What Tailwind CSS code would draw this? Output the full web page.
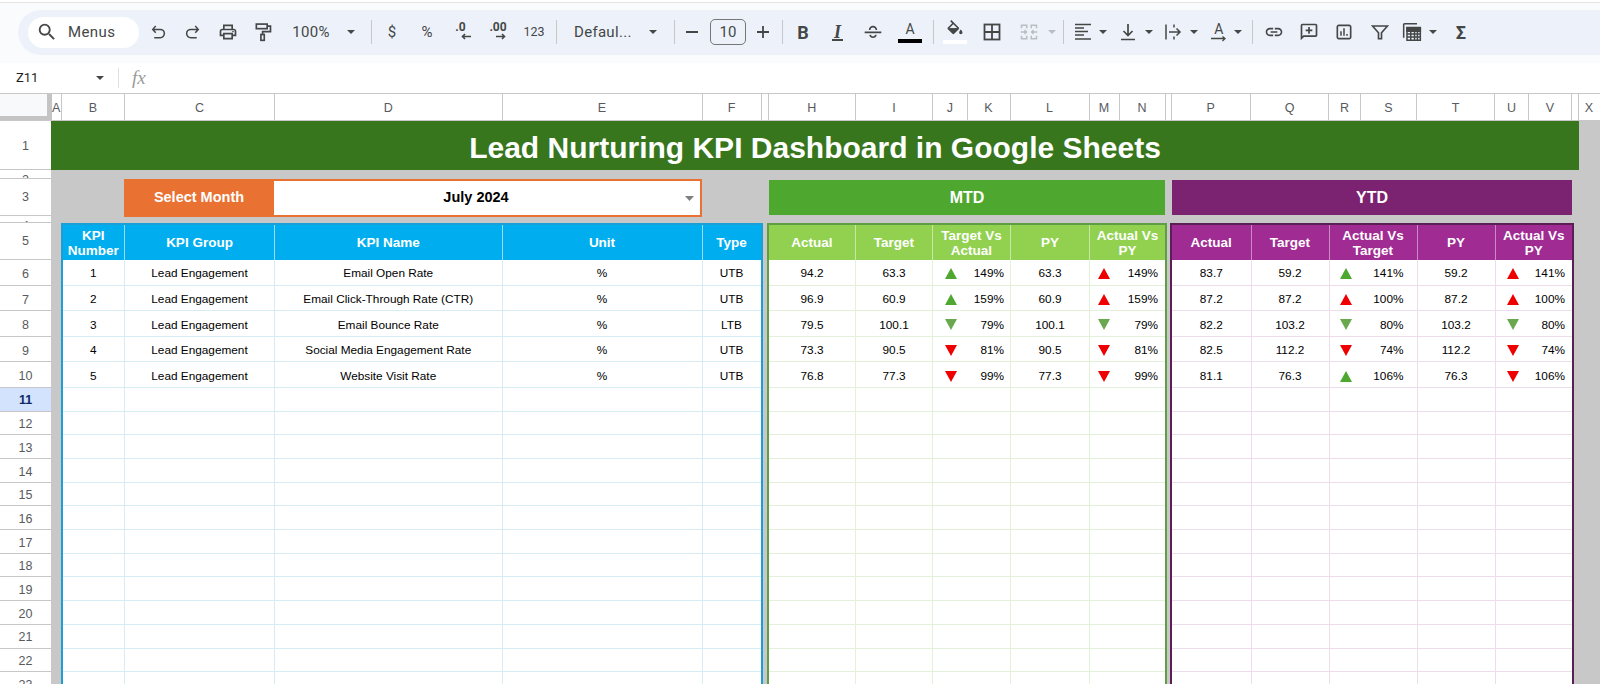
<!DOCTYPE html>
<html lang="en">
<head>
<meta charset="utf-8">
<title>Lead Nurturing KPI Dashboard</title>
<script src="https://cdn.jsdelivr.net/npm/@tailwindcss/browser@4"></script>
</head>
<body class="bg-white">
<div class="w-[1600px] h-[684px] overflow-hidden flex flex-col bg-white font-['Liberation_Sans',sans-serif]">
  <div class="h-[3px] shrink-0 border-b border-[#e3e3e3]"></div>

  <!-- toolbar -->
  <div class="h-[60px] shrink-0 bg-[#f9fbfd] pt-[7px] pl-[18px] font-['Roboto',sans-serif] text-[#444746]">
    <div class="h-[44.5px] bg-[#edf2fa] rounded-l-full flex items-center pl-[10px]">
      <div class="w-[111px] h-[31px] rounded-full bg-white flex items-center pl-[8px] gap-[10px] shrink-0">
        <svg class="w-[22px] h-[22px]" viewBox="0 0 24 24" fill="#444746"><path d="M15.5 14h-.79l-.28-.27A6.47 6.47 0 0 0 16 9.5 6.5 6.5 0 1 0 9.5 16c1.61 0 3.09-.59 4.23-1.57l.27.28v.79l5 4.99L20.49 19l-4.99-5zm-6 0C7.01 14 5 11.99 5 9.5S7.01 5 9.5 5 14 7.01 14 9.5 11.99 14 9.5 14z"/></svg>
        <span class="text-[15px] tracking-[0.4px]">Menus</span>
      </div>
      <svg class="ml-[10px] w-[18px] h-[18px] shrink-0" viewBox="0 0 24 24" fill="none" stroke="#444746" stroke-width="2"><path d="M9 4 L5 8.5 L9 13 M5 8.5 H15 a5.5 5.5 0 0 1 0 11 H7"/></svg>
      <svg class="ml-[17px] w-[18px] h-[18px] shrink-0" viewBox="0 0 24 24" fill="none" stroke="#444746" stroke-width="2"><path d="M15 4 L19 8.5 L15 13 M19 8.5 H9 a5.5 5.5 0 0 0 0 11 H17"/></svg>
      <svg class="ml-[16px] w-[20px] h-[20px] shrink-0" viewBox="0 0 24 24" fill="#444746"><path d="M19 8h-1V3H6v5H5c-1.66 0-3 1.34-3 3v6h4v4h12v-4h4v-6c0-1.66-1.34-3-3-3zM8 5h8v3H8V5zm8 12v2H8v-4h8v2zm2-2v-2H6v2H4v-4c0-.55.45-1 1-1h14c.55 0 1 .45 1 1v4h-2z"/><circle cx="18" cy="11.5" r="1"/></svg>
      <svg class="ml-[14.5px] w-[20px] h-[20px] shrink-0" viewBox="0 0 24 24" fill="none" stroke="#444746" stroke-width="2"><rect x="4" y="2.5" width="13" height="5.5"/><path d="M17 5h4v6.5H11.5V15"/><rect x="9.5" y="15" width="4" height="7"/></svg>
      <span class="ml-[18.5px] w-[40px] shrink-0 text-[15px] tracking-[0.3px] text-center">100%</span>
      <svg class="ml-[16px] w-[8px] h-[4px] shrink-0" viewBox="0 0 8 4" fill="#444746"><path d="M0 0h8L4 4z"/></svg>
      <div class="ml-[15.5px] w-px h-[24px] bg-[#c7c7c7] shrink-0"></div>
      <span class="ml-[14.5px] w-[12px] shrink-0 text-[15px] text-center">$</span>
      <span class="ml-[22px] w-[14px] shrink-0 text-[15px] text-center">%</span>
      <div class="ml-[17.5px] w-[22px] h-[22px] shrink-0 flex flex-col items-center">
        <span class="text-[12px] leading-[12px] font-bold mr-[4px]">.0</span>
        <svg class="w-[10px] h-[7px] ml-[6px]" viewBox="0 0 10 7" fill="none" stroke="#444746" stroke-width="1.6"><path d="M10 3.5H1.5M4 1L1.5 3.5 4 6"/></svg>
      </div>
      <div class="ml-[13.5px] w-[22px] h-[22px] shrink-0 flex flex-col items-center">
        <span class="text-[12px] leading-[12px] font-bold">.00</span>
        <svg class="w-[10px] h-[7px] ml-[6px]" viewBox="0 0 10 7" fill="none" stroke="#444746" stroke-width="1.6"><path d="M0 3.5h8.5M6 1l2.5 2.5L6 6"/></svg>
      </div>
      <span class="ml-[14px] w-[22px] shrink-0 text-[12.5px] text-center">123</span>
      <div class="ml-[11px] w-px h-[24px] bg-[#c7c7c7] shrink-0"></div>
      <span class="ml-[17px] w-[60px] shrink-0 text-[15px] tracking-[0.3px] whitespace-nowrap">Defaul...</span>
      <svg class="ml-[15px] w-[8px] h-[4px] shrink-0" viewBox="0 0 8 4" fill="#444746"><path d="M0 0h8L4 4z"/></svg>
      <div class="ml-[16.5px] w-px h-[24px] bg-[#c7c7c7] shrink-0"></div>
      <div class="ml-[11.5px] w-[12px] h-[2px] bg-[#444746] shrink-0"></div>
      <div class="ml-[12px] w-[36px] h-[26px] shrink-0 rounded-[5px] border border-[#747775] flex items-center justify-center text-[15px]">10</div>
      <svg class="ml-[9.5px] w-[14px] h-[14px] shrink-0" viewBox="0 0 14 14" fill="none" stroke="#444746" stroke-width="1.8"><path d="M7 1v12M1 7h12"/></svg>
      <div class="ml-[12px] w-px h-[24px] bg-[#c7c7c7] shrink-0"></div>
      <span class="ml-[11.5px] w-[18px] shrink-0 text-center text-[18px] font-bold">B</span>
      <div class="ml-[16.5px] w-[18px] shrink-0 flex flex-col items-center">
        <span class="text-[18px] leading-[16px] font-bold italic font-['Liberation_Serif',serif]">I</span>
        <div class="w-[11px] h-[2px] bg-[#444746] -mt-[1px]"></div>
      </div>
      <svg class="ml-[16.5px] w-[20px] h-[20px] shrink-0" viewBox="0 0 24 24" fill="none" stroke="#444746" stroke-width="2"><path d="M8 9.5a4 4 0 0 1 8 0M2 12.5h20M8.5 15.5a3.6 3.6 0 0 0 7 0"/></svg>
      <div class="ml-[15px] w-[24px] shrink-0 flex flex-col items-center">
        <span class="text-[14px] leading-[15px]">A</span>
        <div class="w-[24px] h-[4px] bg-black mt-[2px]"></div>
      </div>
      <div class="ml-[10.5px] w-px h-[24px] bg-[#c7c7c7] shrink-0"></div>
      <div class="ml-[9.5px] w-[24px] shrink-0 flex flex-col items-center">
        <svg class="w-[20px] h-[20px]" viewBox="0 0 24 24" fill="#444746"><path d="M16.56 8.94L7.62 0 6.21 1.41l2.38 2.38-5.15 5.15c-.59.59-.59 1.54 0 2.12l5.5 5.5c.29.29.68.44 1.06.44s.77-.15 1.06-.44l5.5-5.5c.59-.58.59-1.53 0-2.12zM5.21 10L10 5.21 14.79 10H5.21zM19 11.5s-2 2.17-2 3.5c0 1.1.9 2 2 2s2-.9 2-2c0-1.33-2-3.5-2-3.5z"/><path d="M5 10h10l-5 5z"/></svg>
        <div class="w-[24px] h-[4px] bg-white"></div>
      </div>
      <svg class="ml-[16px] w-[18px] h-[18px] shrink-0" viewBox="0 0 24 24" fill="none" stroke="#444746" stroke-width="2.4"><rect x="2" y="2" width="20" height="20"/><path d="M12 2v20M2 12h20"/></svg>
      <svg class="ml-[18.6px] w-[18px] h-[18px] shrink-0" viewBox="0 0 24 24" fill="none" stroke="#b9bdc3" stroke-width="2"><path d="M2 7V3h7v4M2 11v2M2 17v4h7v-4M22 7V3h-7v4M22 11v2M22 17v4h-7v-4M2 12h6M6 9.5L8.5 12 6 14.500M22 12h-6M18 9.500L15.500 12l2.500 2.500"/></svg>
      <svg class="ml-[10.4px] w-[8px] h-[4px] shrink-0" viewBox="0 0 8 4" fill="#b9bdc3"><path d="M0 0h8L4 4z"/></svg>
      <div class="ml-[7.5px] w-px h-[24px] bg-[#c7c7c7] shrink-0"></div>
      <svg class="ml-[10px] w-[18px] h-[18px] shrink-0" viewBox="0 0 18 18" fill="none" stroke="#444746" stroke-width="1.500"><path d="M1 1.500h16M1 5h9M1 8.500h13M1 12h9M1 16h16"/></svg>
      <svg class="ml-[6.4px] w-[8px] h-[4px] shrink-0" viewBox="0 0 8 4" fill="#444746"><path d="M0 0h8L4 4z"/></svg>
      <svg class="ml-[12px] w-[18px] h-[18px] shrink-0" viewBox="0 0 18 18" fill="none" stroke="#444746" stroke-width="1.700"><path d="M9 1v11M4.500 8L9 12.500 13.500 8M2 16.500h14"/></svg>
      <svg class="ml-[8px] w-[8px] h-[4px] shrink-0" viewBox="0 0 8 4" fill="#444746"><path d="M0 0h8L4 4z"/></svg>
      <svg class="ml-[11px] w-[18px] h-[18px] shrink-0" viewBox="0 0 18 18" fill="none" stroke="#444746" stroke-width="1.500"><path d="M2 1.500v15M10 1.500v3M10 13.500v3M5 9h11M12.500 5.500L16 9l-3.500 3.500"/></svg>
      <svg class="ml-[8px] w-[8px] h-[4px] shrink-0" viewBox="0 0 8 4" fill="#444746"><path d="M0 0h8L4 4z"/></svg>
      <div class="ml-[12px] w-[18px] shrink-0 flex flex-col items-center">
        <span class="text-[14px] leading-[13px]">A</span>
        <svg class="w-[16px] h-[6px]" viewBox="0 0 16 6" fill="none" stroke="#444746" stroke-width="1.300"><path d="M0 2.500h14M11.500 0.500L14 2.500l-2.500 2.500"/></svg>
      </div>
      <svg class="ml-[6.6px] w-[8px] h-[4px] shrink-0" viewBox="0 0 8 4" fill="#444746"><path d="M0 0h8L4 4z"/></svg>
      <div class="ml-[9.9px] w-px h-[24px] bg-[#c7c7c7] shrink-0"></div>
      <svg class="ml-[10.5px] w-[20px] h-[20px] shrink-0" viewBox="0 0 24 24" fill="#444746"><path d="M3.9 12c0-1.71 1.39-3.1 3.1-3.1h4V7H7c-2.760 0-5 2.240-5 5s2.240 5 5 5h4v-1.900H7c-1.710 0-3.100-1.390-3.100-3.100zM8 13h8v-2H8v2zm9-6h-4v1.900h4c1.710 0 3.100 1.390 3.100 3.100s-1.390 3.100-3.100 3.100h-4V17h4c2.760 0 5-2.240 5-5s-2.240-5-5-5z"/></svg>
      <svg class="ml-[15px] w-[20px] h-[20px] shrink-0" viewBox="0 0 24 24" fill="#444746"><path d="M20 2H4c-1.100 0-2 .9-2 2v18l4-4h14c1.100 0 2-.9 2-2V4c0-1.100-.9-2-2-2zm0 14H5.200L4 17.200V4h16v12z"/><path d="M11 6h2v3h3v2h-3v3h-2v-3H8V9h3z"/></svg>
      <svg class="ml-[16.6px] w-[18px] h-[18px] shrink-0" viewBox="0 0 24 24" fill="#444746"><path d="M19 2H5C3.400 2 2 3.400 2 5v14c0 1.600 1.400 3 3 3h14c1.600 0 3-1.400 3-3V5c0-1.600-1.400-3-3-3zm.8 17c0 .4-.4.800-.8.800H5c-.4 0-.8-.4-.8-.8V5c0-.4.4-.8.800-.8h14c.4 0 .8.400.8.800v14z"/><path d="M7 11h2v6H7zM11 7h2v10h-2zM15 14.500h2V17h-2z"/></svg>
      <svg class="ml-[17.4px] w-[18px] h-[18px] shrink-0" viewBox="0 0 24 24" fill="none" stroke="#444746" stroke-width="2.200"><path d="M2 4h20l-8 9v8h-4v-8z"/></svg>
      <svg class="ml-[13px] w-[20px] h-[20px] shrink-0" viewBox="0 0 24 24" fill="none" stroke="#444746" stroke-width="1.800"><path d="M2 19V3c0-.6.4-1 1-1h15"/><path d="M6 6.500h16V22H6z"/><path d="M6 7h16v4H6z" fill="#444746"/><path d="M10.500 11v11M15 11v11M18.500 11v11M6 14.500h16M6 18h16"/></svg>
      <svg class="ml-[7px] w-[8px] h-[4px] shrink-0" viewBox="0 0 8 4" fill="#444746"><path d="M0 0h8L4 4z"/></svg>
      <span class="ml-[17px] w-[14px] shrink-0 text-center text-[18px] font-bold">Σ</span>
    </div>
  </div>

  <!-- formula bar -->
  <div class="h-[31px] shrink-0 border-b border-[#c7c7c7] flex items-center font-['Roboto',sans-serif] text-[#1f1f1f]">
    <span class="ml-[16px] w-[80px] text-[13px]">Z11</span>
    <svg class="w-[8px] h-[4px]" viewBox="0 0 8 4" fill="#444746"><path d="M0 0h8L4 4z"/></svg>
    <div class="ml-[14px] w-px h-[20px] bg-[#e0e0e0]"></div>
    <span class="ml-[13px] text-[19px] italic text-[#9a9a9a] font-['Liberation_Serif',serif]">fx</span>
  </div>

  <!-- column letters -->
  <div class="h-[27px] shrink-0 flex text-[12.5px] text-[#575a5e] border-b border-[#c7c7c7]">
    <div class="w-[51.5px] shrink-0 bg-[#f8f9fa] border-r-[5px] border-b-[4px] border-[#c4c4c4]"></div>
    <div class="w-[10.5px] shrink-0 pt-[2px] border-r border-[#c7c7c7] flex items-center justify-center">A</div>
    <div class="w-[63px] shrink-0 pt-[2px] border-r border-[#c7c7c7] flex items-center justify-center">B</div>
    <div class="w-[150px] shrink-0 pt-[2px] border-r border-[#c7c7c7] flex items-center justify-center">C</div>
    <div class="w-[227.5px] shrink-0 pt-[2px] border-r border-[#c7c7c7] flex items-center justify-center">D</div>
    <div class="w-[200px] shrink-0 pt-[2px] border-r border-[#c7c7c7] flex items-center justify-center">E</div>
    <div class="w-[59px] shrink-0 pt-[2px] border-r border-[#c7c7c7] flex items-center justify-center">F</div>
    <div class="w-[7px] shrink-0 border-r border-[#c7c7c7]"></div>
    <div class="w-[87.5px] shrink-0 pt-[2px] border-r border-[#c7c7c7] flex items-center justify-center">H</div>
    <div class="w-[77px] shrink-0 pt-[2px] border-r border-[#c7c7c7] flex items-center justify-center">I</div>
    <div class="w-[34.500px] shrink-0 pt-[2px] border-r border-[#c7c7c7] flex items-center justify-center">J</div>
    <div class="w-[43px] shrink-0 pt-[2px] border-r border-[#c7c7c7] flex items-center justify-center">K</div>
    <div class="w-[79px] shrink-0 pt-[2px] border-r border-[#c7c7c7] flex items-center justify-center">L</div>
    <div class="w-[30px] shrink-0 pt-[2px] border-r border-[#c7c7c7] flex items-center justify-center">M</div>
    <div class="w-[46px] shrink-0 pt-[2px] border-r border-[#c7c7c7] flex items-center justify-center">N</div>
    <div class="w-[6px] shrink-0 border-r border-[#c7c7c7]"></div>
    <div class="w-[79.500px] shrink-0 pt-[2px] border-r border-[#c7c7c7] flex items-center justify-center">P</div>
    <div class="w-[78px] shrink-0 pt-[2px] border-r border-[#c7c7c7] flex items-center justify-center">Q</div>
    <div class="w-[32px] shrink-0 pt-[2px] border-r border-[#c7c7c7] flex items-center justify-center">R</div>
    <div class="w-[56px] shrink-0 pt-[2px] border-r border-[#c7c7c7] flex items-center justify-center">S</div>
    <div class="w-[78px] shrink-0 pt-[2px] border-r border-[#c7c7c7] flex items-center justify-center">T</div>
    <div class="w-[34px] shrink-0 pt-[2px] border-r border-[#c7c7c7] flex items-center justify-center">U</div>
    <div class="w-[43px] shrink-0 pt-[2px] border-r border-[#c7c7c7] flex items-center justify-center">V</div>
    <div class="w-[6.500px] shrink-0 border-r border-[#c7c7c7]"></div>
    <div class="w-[21px] shrink-0 pt-[2px] flex items-center justify-center">X</div>
  </div>

  <!-- sheet -->
  <div class="flex-1 min-h-0 flex overflow-hidden">
    <div id="rowHead" class="w-[51px] shrink-0 flex flex-col text-[12.5px] text-[#575a5e]"></div>

    <div class="flex-1 min-w-0 bg-[#c8c8c8] flex flex-col">
      <div class="h-[49px] shrink-0 w-[1528px] pt-[3px] bg-[#38761d] flex items-center justify-center text-white font-bold text-[30px]">Lead Nurturing KPI Dashboard in Google Sheets</div>
      <div class="h-[9px] shrink-0"></div>
      <div class="h-[37px] shrink-0 flex items-center">
        <div class="ml-[73px] w-[150px] h-[38px] bg-[#e97132] flex items-center justify-center text-white font-bold text-[14.5px] shrink-0">Select Month</div>
        <div class="w-[428px] h-[38px] pr-[22px] bg-white border-2 border-l-0 border-[#e97132] flex items-center justify-center relative text-black font-bold text-[14.5px] shrink-0">
          July 2024
          <svg class="absolute right-[6px] top-[15px] w-[9px] h-[5px]" viewBox="0 0 9 5" fill="#7f7f7f"><path d="M0 0h9L4.500 5z"/></svg>
        </div>
        <div class="ml-[67px] w-[396px] h-[35px] bg-[#4ea72e] flex items-center justify-center text-white font-bold text-[16px] shrink-0">MTD</div>
        <div class="ml-[7px] w-[400px] h-[35px] bg-[#7b2270] flex items-center justify-center text-white font-bold text-[16px] shrink-0">YTD</div>
      </div>
      <div class="h-[7px] shrink-0"></div>
      <div class="flex-1 min-h-0 flex items-stretch">
        <div id="tblKpi" class="ml-[9.5px] w-[702px] shrink-0 h-[600px] bg-white border-2 border-[#1a9fd6] text-black text-[11.8px]"></div>
        <div id="tblMtd" class="ml-[4.5px] w-[400px] shrink-0 h-[600px] bg-white border-2 border-[#5f9e45] text-black text-[11.8px]"></div>
        <div id="tblYtd" class="ml-[3px] w-[404px] shrink-0 h-[600px] bg-white border-2 border-[#5c1f55] text-black text-[11.8px]"></div>
      </div>
    </div>
  </div>
</div>

<script>
  var up = function (c) { return '<svg class="w-[12px] h-[11px] shrink-0" viewBox="0 0 12 11"><path fill="' + c + '" d="M6 0l6 11H0z"/></svg>'; };
  var dn = function (c) { return '<svg class="w-[12px] h-[11px] shrink-0" viewBox="0 0 12 11"><path fill="' + c + '" d="M0 0h12L6 11z"/></svg>'; };
  var G = '#4ea72e', L = '#6aa84f', R = '#ee0000';

  /* row numbers */
  var rh = '';
  var hs = ['h-[49px] pt-[2px] items-center', 'h-[9px] pt-[3px] items-start leading-[14px]', 'h-[37px] items-center', 'h-[7px] pt-[3px] items-start leading-[14px]', 'h-[37px] items-center'];
  for (var i = 1; i <= 23; i++) {
    var h = i <= 5 ? hs[i - 1] : i <= 10 ? 'h-[25.6px] pt-[4px] items-center' : 'h-[23.7px] pt-[3px] items-center';
    var sel = i === 11 ? ' bg-[#d3e3fd] font-bold text-[#0b2a66]' : '';
    rh += '<div class="shrink-0 overflow-hidden flex justify-center border-b border-[#c7c7c7] ' + h + sel + '">' + i + '</div>';
  }
  document.getElementById('rowHead').innerHTML = rh;

  /* left KPI table */
  var kpiCols = 'grid grid-cols-[62.5px_150px_227.5px_200px_58px]';
  var kh = ['KPI<br>Number', 'KPI Group', 'KPI Name', 'Unit', 'Type'];
  var k = [
    ['1', 'Lead Engagement', 'Email Open Rate', '%', 'UTB'],
    ['2', 'Lead Engagement', 'Email Click-Through Rate (CTR)', '%', 'UTB'],
    ['3', 'Lead Engagement', 'Email Bounce Rate', '%', 'LTB'],
    ['4', 'Lead Engagement', 'Social Media Engagement Rate', '%', 'UTB'],
    ['5', 'Lead Engagement', 'Website Visit Rate', '%', 'UTB']
  ];
  var s = '<div class="' + kpiCols + ' h-[35px] bg-[#00aeef] text-white font-bold text-[13.5px] leading-[15px] text-center">';
  kh.forEach(function (t) { s += '<div class="flex items-center justify-center border-r border-[#9adcf6] last:border-r-0">' + t + '</div>'; });
  s += '</div>';
  for (var r = 0; r < 18; r++) {
    s += '<div class="' + kpiCols + (r < 5 ? ' h-[25.6px]' : ' h-[23.7px]') + ' border-b border-[#d6edf6]">';
    for (var c = 0; c < 5; c++) s += '<div class="pt-[4px] flex items-center justify-center border-r border-[#d6edf6] last:border-r-0">' + (k[r] ? k[r][c] : '') + '</div>';
    s += '</div>';
  }
  document.getElementById('tblKpi').innerHTML = s;

  /* comparison tables */
  function cmp(id, cols, heads, headCls, lineCls, hsep, rows, pads) {
    var o = '<div class="' + cols + ' h-[35px] ' + headCls + ' text-white font-bold text-[13.5px] leading-[15px] text-center">';
    heads.forEach(function (t) { o += '<div class="flex items-center justify-center border-r ' + hsep + ' last:border-r-0">' + t + '</div>'; });
    o += '</div>';
    for (var r = 0; r < 18; r++) {
      var d = rows[r];
      o += '<div class="' + cols + (r < 5 ? ' h-[25.6px]' : ' h-[23.7px]') + ' border-b ' + lineCls + '">';
      [0, 1, 2, 3, 4].forEach(function (c) {
        var cell = d ? d[c] : '';
        if (d && (c === 2 || c === 4)) {
          o += '<div class="pt-[3px] flex items-center justify-between border-r ' + lineCls + ' last:border-r-0 ' + pads[c === 2 ? 0 : 1] + '">' + cell[0] + '<span class="pt-[1px]">' + cell[1] + '</span></div>';
        } else {
          o += '<div class="pt-[4px] flex items-center justify-center border-r ' + lineCls + ' last:border-r-0">' + cell + '</div>';
        }
      });
      o += '</div>';
    }
    document.getElementById(id).innerHTML = o;
  }

  cmp('tblMtd', 'grid grid-cols-[87px_77px_78px_79px_75px]',
    ['Actual', 'Target', 'Target Vs<br>Actual', 'PY', 'Actual Vs<br>PY'],
    'bg-[#92d14f]', 'border-[#e3f1da]', 'border-[#c8e8a8]',
    [
      ['94.2', '63.3', [up(G), '149%'], '63.3', [up(R), '149%']],
      ['96.9', '60.9', [up(G), '159%'], '60.9', [up(R), '159%']],
      ['79.5', '100.1', [dn(L), '79%'], '100.1', [dn(L), '79%']],
      ['73.3', '90.5', [dn(R), '81%'], '90.5', [dn(R), '81%']],
      ['76.8', '77.3', [dn(R), '99%'], '77.3', [dn(R), '99%']]
    ], ['pl-[12px] pr-[6px]', 'pl-[8px] pr-[7px]']);

  cmp('tblYtd', 'grid grid-cols-[79.5px_78px_88px_78px_76.5px]',
    ['Actual', 'Target', 'Actual Vs<br>Target', 'PY', 'Actual Vs<br>PY'],
    'bg-[#a02b93]', 'border-[#eddcec]', 'border-[#c98cc2]',
    [
      ['83.7', '59.2', [up(G), '141%'], '59.2', [up(R), '141%']],
      ['87.2', '87.2', [up(R), '100%'], '87.2', [up(R), '100%']],
      ['82.2', '103.2', [dn(L), '80%'], '103.2', [dn(L), '80%']],
      ['82.5', '112.2', [dn(R), '74%'], '112.2', [dn(R), '74%']],
      ['81.1', '76.3', [up(G), '106%'], '76.3', [dn(R), '106%']]
    ], ['pl-[10px] pr-[13px]', 'pl-[11px] pr-[7px]']);
</script>
</body>
</html>
